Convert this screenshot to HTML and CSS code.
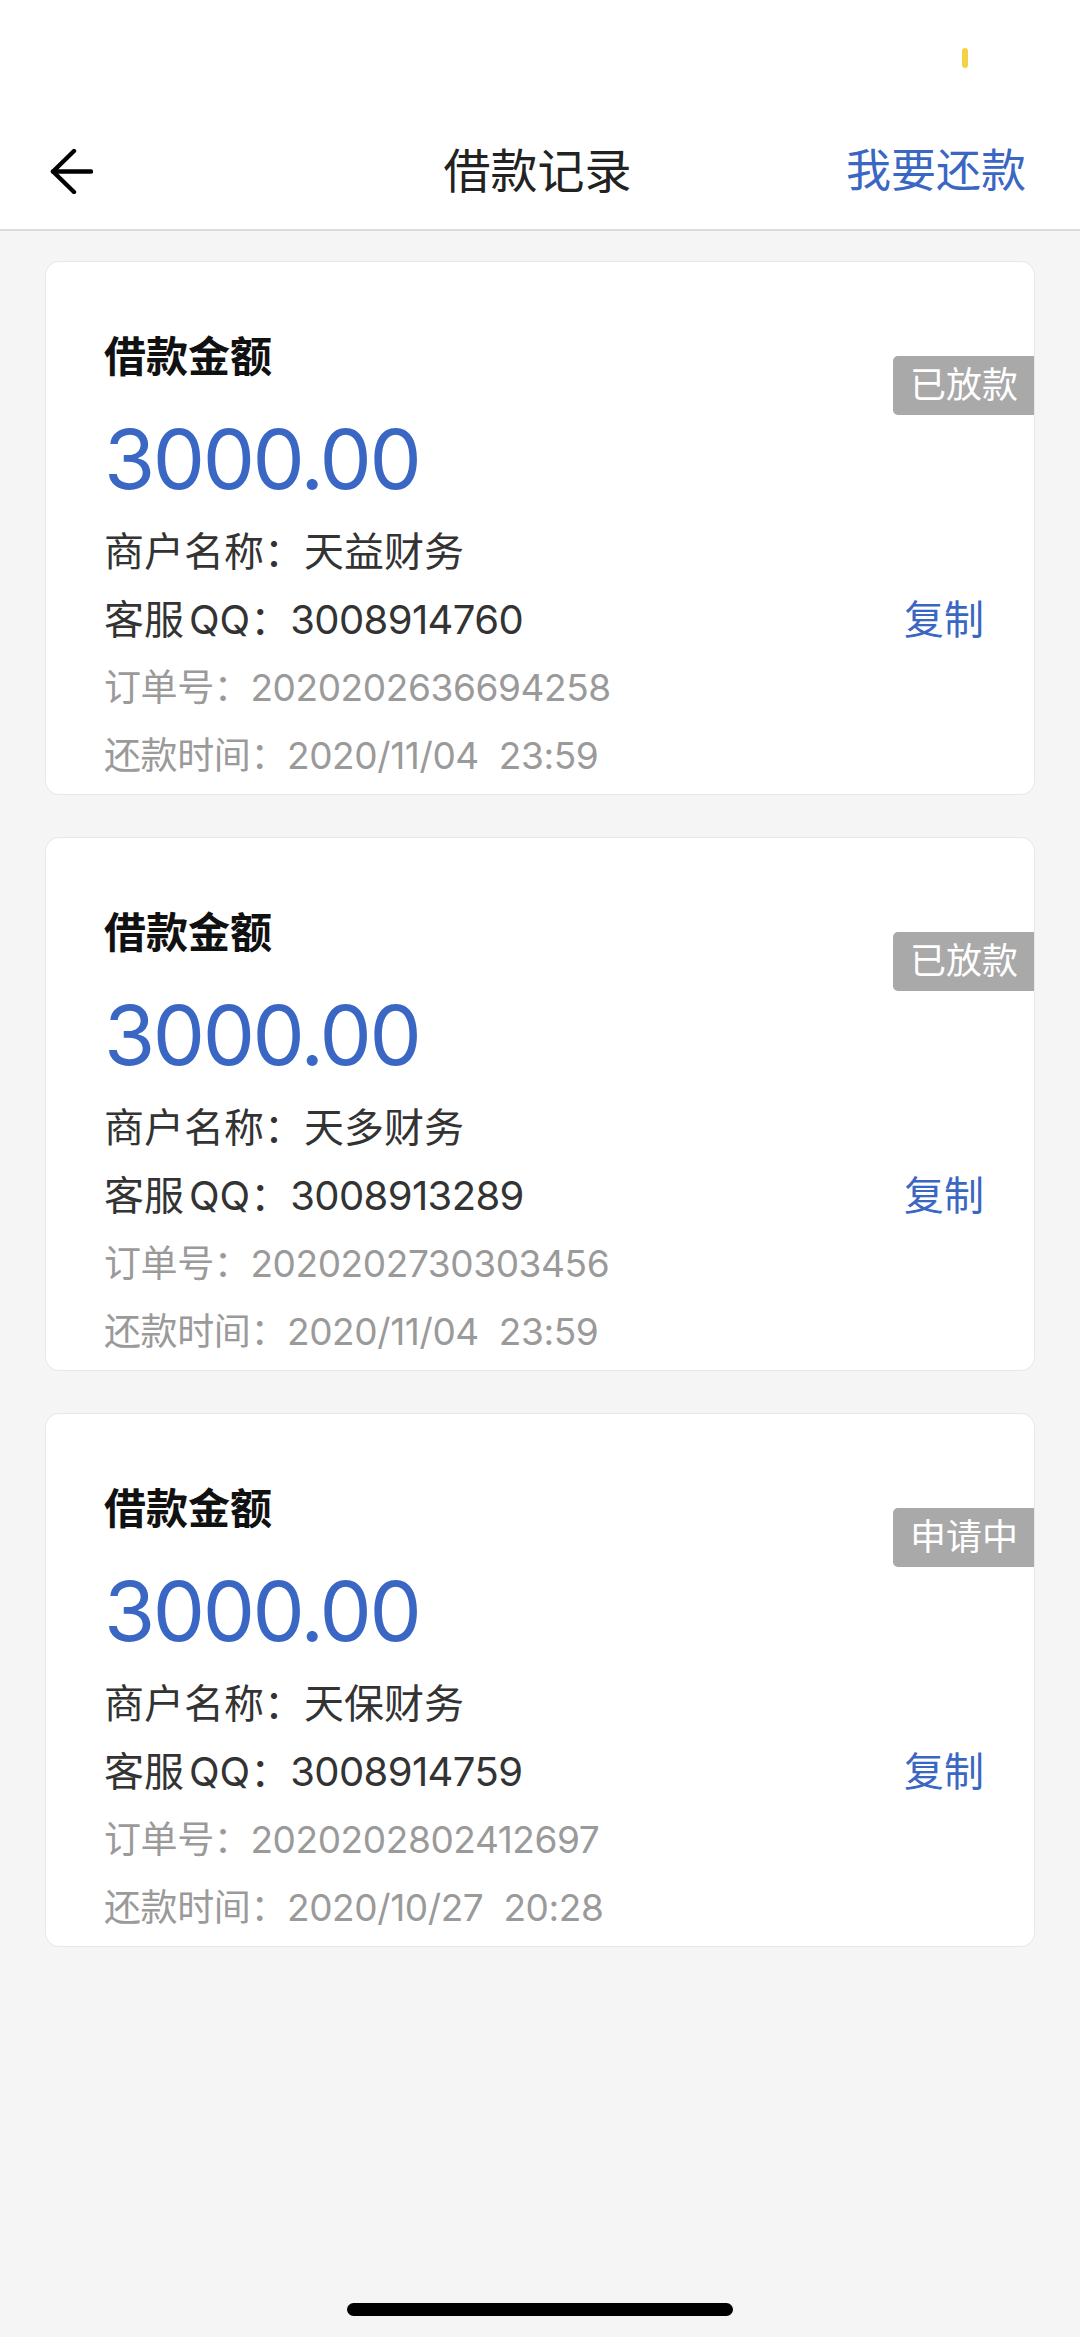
FILE: index.html
```html
<!DOCTYPE html>
<html lang="zh-CN">
<head>
    <meta charset="UTF-8">
    <meta name="viewport" content="width=device-width, initial-scale=1.0">
    <title>借款记录</title>
    <link rel="stylesheet" href="styles.css">
</head>
<body>
    <div class="page">
        <header class="topbar">
            <div class="status-bar">
                <span class="status-dot"></span>
            </div>
            <nav class="navbar">
                <a class="back" href="#">
                    <svg width="44" height="46" viewBox="0 0 44 46" fill="none" stroke="#000" stroke-width="4.4" stroke-linecap="round" stroke-linejoin="round">
                        <path d="M4 23.5 H42"/>
                        <path d="M25 3 L4 23.5 L25 44"/>
                    </svg>
                </a>
                <h1 class="nav-title">借款记录</h1>
                <a class="nav-action" href="#">我要还款</a>
            </nav>
        </header>

        <main class="record-list">
            <div class="record-card">
                <span class="badge">已放款</span>
                <div class="card-title">借款金额</div>
                <div class="amount">3000.00</div>
                <div class="row">商户名称：天益财务</div>
                <div class="row row-qq">
                    <span>客服<span class="qq">QQ</span>：<span class="num">3008914760</span></span>
                    <a class="copy" href="#">复制</a>
                </div>
                <div class="row row-muted">订单号：2020202636694258</div>
                <div class="row row-muted">还款时间：2020/11/04&nbsp;&nbsp;23:59</div>
            </div>

            <div class="record-card">
                <span class="badge">已放款</span>
                <div class="card-title">借款金额</div>
                <div class="amount">3000.00</div>
                <div class="row">商户名称：天多财务</div>
                <div class="row row-qq">
                    <span>客服<span class="qq">QQ</span>：<span class="num">3008913289</span></span>
                    <a class="copy" href="#">复制</a>
                </div>
                <div class="row row-muted">订单号：2020202730303456</div>
                <div class="row row-muted">还款时间：2020/11/04&nbsp;&nbsp;23:59</div>
            </div>

            <div class="record-card">
                <span class="badge">申请中</span>
                <div class="card-title">借款金额</div>
                <div class="amount">3000.00</div>
                <div class="row">商户名称：天保财务</div>
                <div class="row row-qq">
                    <span>客服<span class="qq">QQ</span>：<span class="num">3008914759</span></span>
                    <a class="copy" href="#">复制</a>
                </div>
                <div class="row row-muted">订单号：2020202802412697</div>
                <div class="row row-muted">还款时间：2020/10/27&nbsp;&nbsp;20:28</div>
            </div>
        </main>

        <footer class="home-bar">
            <span class="home-indicator"></span>
        </footer>
    </div>
</body>
</html>
```

FILE: styles.css
```css
/* loan records page */
* {
    box-sizing: border-box;
}
html, body {
    margin: 0;
    padding: 0;
}
body {
    font-family: Inter, "Noto Sans CJK SC", sans-serif;
    background-color: #f5f5f5;
    color: #333;
}
a {
    text-decoration: none;
}
.page {
    min-height: 100vh;
    display: flex;
    flex-direction: column;
}

/* top bar */
.topbar {
    background-color: #fff;
    border-bottom: 2px solid #dcdcdc;
}
.status-bar {
    height: 113px;
    display: flex;
    justify-content: flex-end;
    padding: 48px 112px 0 0;
}
.status-dot {
    width: 6px;
    height: 20px;
    border-radius: 3px;
    background-color: #f2d348;
}
.navbar {
    height: 116px;
    display: grid;
    grid-template-columns: 1fr auto 1fr;
    align-items: center;
    padding: 0 54px 0 49px;
}
.back {
    display: flex;
    align-items: center;
}
.nav-title {
    margin: 0;
    font-size: 47px;
    font-weight: 400;
    color: #222;
    line-height: 60px;
}
.nav-action {
    justify-self: end;
    font-size: 45px;
    color: #3a66c4;
    line-height: 60px;
}

/* cards */
.record-list {
    padding-top: 30px;
}
.record-card {
    position: relative;
    margin: 0 45px 42px;
    padding: 65px 50px 4px 58px;
    background-color: #fff;
    border: 1px solid #e8e8e8;
    border-radius: 14px;
}
.badge {
    position: absolute;
    top: 94px;
    right: 0;
    height: 59px;
    line-height: 59px;
    padding: 0 16px 0 17px;
    font-size: 36px;
    color: #fff;
    background-color: #a9a9a9;
    border-radius: 5px 0 0 5px;
}
.card-title {
    font-size: 42px;
    font-weight: 700;
    color: #111;
    line-height: 60px;
}
.amount {
    margin-top: 17px;
    font-size: 83px;
    line-height: 110px;
    letter-spacing: -2.5px;
    color: #3a66c4;
}
.row {
    font-size: 40px;
    line-height: 68px;
    color: #333;
    white-space: nowrap;
}
.amount + .row {
    margin-top: 4px;
}
.row-qq {
    display: flex;
    justify-content: space-between;
}
.qq {
    margin-left: 5px;
}
.num {
    letter-spacing: -0.6px;
}
.copy {
    color: #3a66c4;
}
.row-muted {
    font-size: 37px;
    letter-spacing: -0.4px;
    color: #9a9a9a;
}

/* home indicator */
.home-bar {
    margin-top: auto;
    display: flex;
    justify-content: center;
    padding-bottom: 21px;
}
.home-indicator {
    width: 386px;
    height: 13px;
    border-radius: 7px;
    background-color: #000;
}
```
